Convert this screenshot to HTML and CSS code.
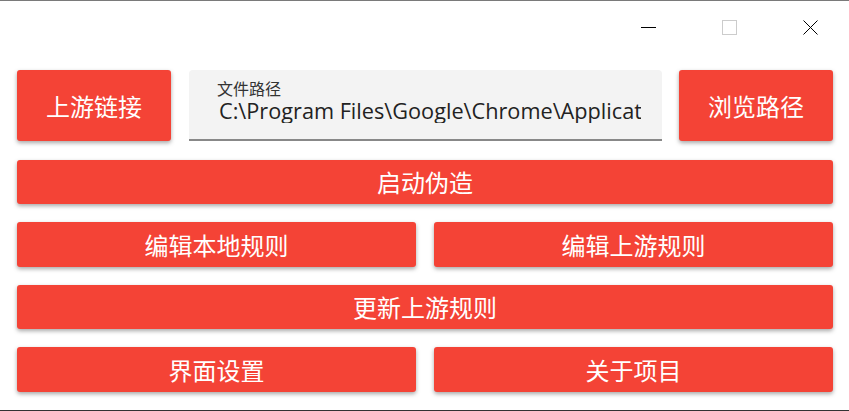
FILE: index.html
```html
<!DOCTYPE html>
<html lang="zh">
<head>
<meta charset="utf-8">
<link rel="stylesheet" href="styles.css">
</head>
<body>
<div class="window">
  <div class="titlebar">
    <svg class="cap" width="15" height="15" viewBox="0 0 15 15"><line x1="0" y1="7.5" x2="15" y2="7.5" stroke="#000" stroke-width="1"/></svg>
    <svg class="cap" width="15" height="15" viewBox="0 0 15 15"><rect x="0.5" y="0.5" width="14" height="14" fill="none" stroke="#cccccc" stroke-width="1"/></svg>
    <svg class="cap" width="15" height="15" viewBox="0 0 15 15"><path d="M0.5 0.5 L14.5 14.5 M14.5 0.5 L0.5 14.5" stroke="#000" stroke-width="1" fill="none"/></svg>
  </div>
  <div class="content">
    <div class="row-top">
      <button class="btn btn-big">上游链接</button>
      <div class="field">
        <div class="field-label">文件路径</div>
        <div class="field-value">C:\Program Files\Google\Chrome\Application</div>
      </div>
      <button class="btn btn-big">浏览路径</button>
    </div>
    <button class="btn btn-wide">启动伪造</button>
    <div class="row-two">
      <button class="btn">编辑本地规则</button>
      <button class="btn">编辑上游规则</button>
    </div>
    <button class="btn btn-wide">更新上游规则</button>
    <div class="row-two">
      <button class="btn">界面设置</button>
      <button class="btn">关于项目</button>
    </div>
  </div>
</div>
</body>
</html>
```

FILE: styles.css
```css
html, body {
  margin: 0;
  padding: 0;
  background: #ffffff;
}
.window {
  width: 849px;
  height: 411px;
  box-sizing: border-box;
  border-top: 1px solid #7a7a7a;
  border-bottom: 1px solid #333333;
  background: #ffffff;
  font-family: "Noto Sans CJK SC", "Noto Sans", sans-serif;
  overflow: hidden;
}
.titlebar {
  height: 53px;
  display: flex;
  justify-content: flex-end;
  align-items: flex-start;
  padding: 19px 31px 0 0;
  box-sizing: border-box;
  gap: 66px;
}
.cap {
  display: block;
}
.content {
  padding: 16px 16px 0 17px;
  display: flex;
  flex-direction: column;
  gap: 18px;
}
.btn {
  background: #f44336;
  color: #ffffff;
  border: none;
  border-radius: 3px;
  box-shadow: 0 2px 4px rgba(0, 0, 0, 0.35);
  font-family: "Noto Sans CJK SC", "Noto Sans", sans-serif;
  font-size: 24px;
  padding: 0;
  margin: 0;
  height: 45px;
  line-height: 1;
  display: flex;
  align-items: center;
  justify-content: center;
}
.btn-wide {
  width: 100%;
  height: 44px;
}
.row-top {
  display: flex;
  height: 71px;
  gap: 17px;
  margin-bottom: 1px;
}
.btn-big {
  width: 154px;
  height: 71px;
  flex: none;
}
.row-top .btn-big:first-child {
  margin-right: 1px;
}
.field {
  flex: 1;
  min-width: 0;
  background: #f3f3f3;
  border-radius: 4px 4px 0 0;
  border-bottom: 2px solid #888888;
  box-sizing: border-box;
  padding: 7px 21px 0 28px;
  overflow: hidden;
}
.field-label {
  font-size: 16px;
  line-height: 22px;
  color: #333333;
}
.field-value {
  font-family: "Open Sans", "Noto Sans", sans-serif;
  font-size: 21.7px;
  line-height: 24px;
  color: #222222;
  white-space: nowrap;
  overflow: hidden;
  margin-left: 2px;
}
.row-two {
  display: grid;
  grid-template-columns: 1fr 1fr;
  column-gap: 18px;
}
```
